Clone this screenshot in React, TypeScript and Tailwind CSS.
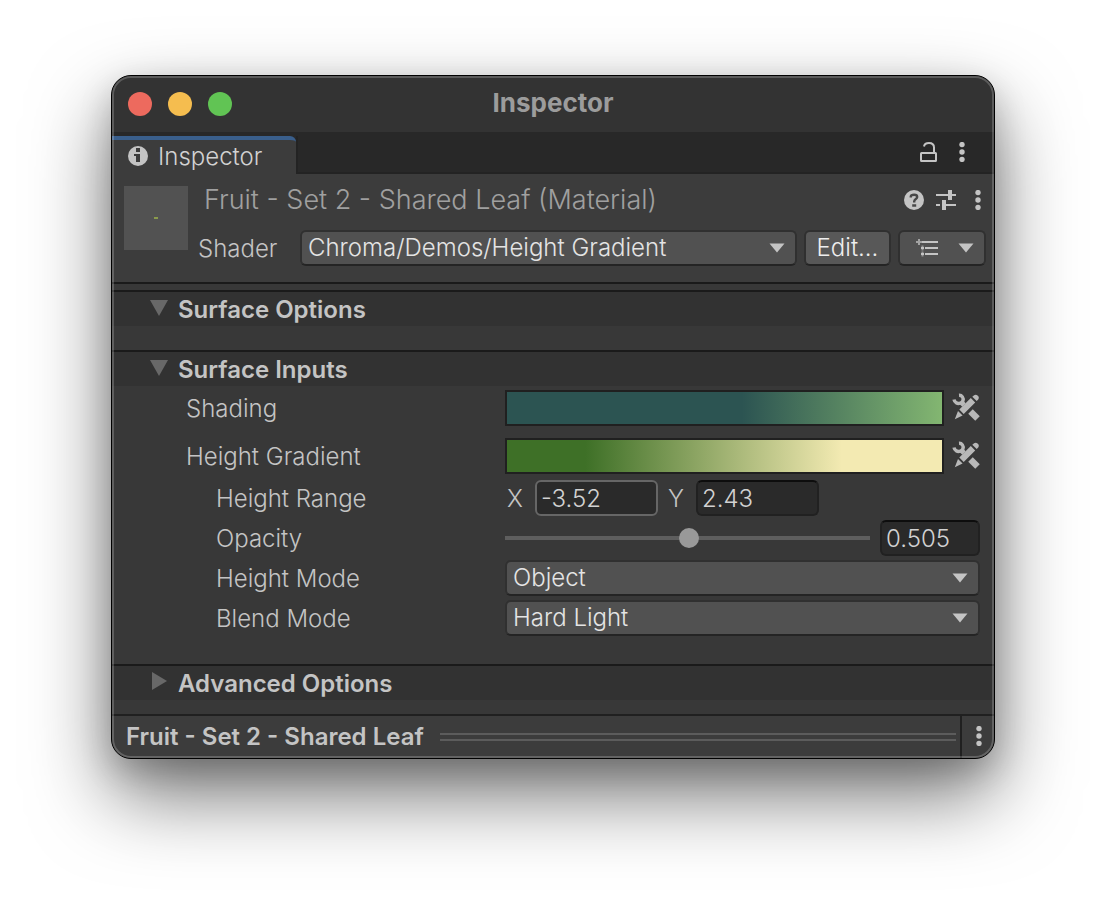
import React, { useState } from "react";

type IconProps = { className?: string };

function Kebab({ className = "" }: IconProps) {
  return (
    <svg className={className} width="8" height="20" viewBox="0 0 8 20" fill="#c4c4c4" aria-hidden="true">
      <circle cx="4" cy="2.6" r="2.7" />
      <circle cx="4" cy="10" r="2.7" />
      <circle cx="4" cy="17.4" r="2.7" />
    </svg>
  );
}

function InfoIcon() {
  return (
    <svg width="20" height="20" viewBox="0 0 20 20" aria-hidden="true">
      <circle cx="10" cy="10" r="10" fill="#c4c4c4" />
      <path d="M8 2h4v4H8zM6 8h6v8H8v-6H6z" fill="#3c3c3c" />
    </svg>
  );
}

function HelpIcon() {
  return (
    <svg width="20" height="20" viewBox="0 0 20 20" aria-hidden="true">
      <circle cx="10" cy="10" r="10" fill="#c4c4c4" />
      <path d="M6.800 7.500V6.400C7 4.900 8.300 4.800 10.200 4.800c2 0 3 .4 3 2.200 0 2.200-3 2-3 4.600v.8" fill="none" stroke="#484848" strokeWidth="2.400" />
      <path d="M8.200 14.200h4v2.600h-4z" fill="#484848" />
    </svg>
  );
}

function LockIcon() {
  return (
    <svg width="18" height="20" viewBox="0 0 18 20" fill="none" stroke="#c4c4c4" strokeWidth="2" aria-hidden="true">
      <rect x="1" y="11" width="15" height="8" rx="0.5" />
      <path d="M4 4.500C4.300 2.300 6.300 1 9 1c3.200 0 5 1.900 5 4.500V11" />
    </svg>
  );
}

function PresetIcon() {
  return (
    <svg width="20" height="20" viewBox="0 0 20 20" fill="#c4c4c4" aria-hidden="true">
      <path d="M0 4h12v2H0zM12 0h4v4h4v2h-4v4h-4zM0 14h4v2H0zM6 10h4v4h10v2H10v4H6z" />
    </svg>
  );
}

function ListIcon() {
  return (
    <svg width="22" height="18" viewBox="0 0 22 18" fill="#c4c4c4" aria-hidden="true">
      <path d="M6 2h16v2H6zM9 8h13v2H9zM9 14h13v2H9z" />
      <path d="M5 8h3v2H5zM5 14h3v2H5z" />
      <path d="M5.500 6.500h2v5h-2zM5.500 12.500h2v5h-2z" opacity=".6" />
      <path d="M2 0h2v6H2zM0 2h6v2H0z" opacity=".7" />
    </svg>
  );
}

function ToolsIcon() {
  return (
    <svg width="28" height="28" viewBox="0 0 28 28" aria-hidden="true">
      <g fill="none" stroke="#b8b8b8">
        <path d="M2 6.500C2.600 9.600 5.200 11 8.200 10.200c2.800-.8 3.800-3.900 2.200-6.300C9.600 2.700 8.500 2.100 7 2.200" strokeWidth="3.400" />
        <path d="M9 9l3 3" strokeWidth="5" />
        <path d="M18.500 18.500l7 7" strokeWidth="6.400" />
      </g>
      <path d="M18.800 5L23.200 9.400 11.700 21 7.300 16.600zM20.300 3.700L22.100 2.300c1-.9 2.500-.7 3.400.2l.6.6c.9.9 1 2.400.1 3.300L24.700 8.100zM6 18l4.600 4.600L2.800 26.200z" fill="#b8b8b8" />
    </svg>
  );
}

function Caret({ className = "" }: IconProps) {
  return (
    <svg className={className} width="16" height="10" viewBox="0 0 16 10" fill="#c4c4c4" aria-hidden="true">
      <path d="M.5 0.500h15L8 9.500z" />
    </svg>
  );
}

function Dropdown({ id, options }: { id: string; options: string[] }) {
  return (
    <div className="relative min-w-0 flex-1">
      <select
        id={id}
        className="block h-9 w-full appearance-none rounded-md border-2 border-[#303030] border-b-[#242424] bg-[#515151] pr-8 pl-[6px] text-[24px] leading-7 font-[350] text-[#e4e4e4] outline-none"
      >
        {options.map((o) => (
          <option key={o}>{o}</option>
        ))}
      </select>
      <Caret className="pointer-events-none absolute top-[13px] right-3" />
    </div>
  );
}

function Section({ title, open = false, children }: { title: string; open?: boolean; children?: React.ReactNode }) {
  const [expanded, setExpanded] = useState(open);
  return (
    <section>
      <h2>
        <button
          type="button"
          aria-expanded={expanded}
          onClick={() => setExpanded(!expanded)}
          className="flex h-9 w-full items-center border-t-2 border-[#1a1a1a] bg-[#323232] pt-[2px] pl-[38px] text-left font-semibold"
        >
          <span className="flex h-6 w-7 items-start">
            <svg width="18" height="20" viewBox="0 0 18 20" fill="#686868" aria-hidden="true">
              {expanded ? <path d="M0 2h18L9 18z" /> : <path d="M2 0v18l15-9z" />}
            </svg>
          </span>
          {title}
        </button>
      </h2>
      {expanded && children}
    </section>
  );
}

function Row({ label, htmlFor, nested = false, children }: { label: string; htmlFor: string; nested?: boolean; children: React.ReactNode }) {
  return (
    <div className="flex h-9 items-center">
      <label htmlFor={htmlFor} className={nested ? "w-[319px] shrink-0 pt-[2px] pl-[30px]" : "w-[319px] shrink-0 pt-[2px]"}>
        {label}
      </label>
      {children}
    </div>
  );
}

function GradientField({ id, name, className }: { id: string; name: string; className: string }) {
  return (
    <>
      <button id={id} type="button" aria-label={name} className={`h-9 min-w-0 flex-1 border-2 border-[#202020] ${className}`} />
      <button type="button" aria-label={`${name} tools`} className="ml-2 flex shrink-0 pb-[2px]">
        <ToolsIcon />
      </button>
    </>
  );
}

const field = "h-9 rounded-md border-2 bg-[#2a2a2a] px-1 text-[24px] font-[350] text-[#d2d2d2] outline-none";
const rest = "border-[#212121] border-t-[#0d0d0d]";

export default function App() {
  const [opacity, setOpacity] = useState("0.505");
  return (
    <main className="min-h-screen overflow-hidden bg-white px-[111px] pt-[75px] pb-[147px] font-['Inter',sans-serif] text-[24px] leading-7 font-[350] text-[#c4c4c4]">
      <div className="relative overflow-hidden rounded-[20px] border border-black bg-[#383838] shadow-[0_36px_80px_rgba(0,0,0,0.55),0_12px_32px_rgba(0,0,0,0.18)]">
        <header className="grid h-14 grid-cols-[1fr_auto_1fr] items-center bg-[#333333] px-4">
          <div className="flex gap-4">
            <button type="button" aria-label="Close" className="size-6 rounded-full bg-[#ed6a5e]" />
            <button type="button" aria-label="Minimize" className="size-6 rounded-full bg-[#f5bd4f]" />
            <button type="button" aria-label="Zoom" className="size-6 rounded-full bg-[#61c454]" />
          </div>
          <h1 className="pb-[2px] text-[26px] font-bold text-[#9c9c9c]">Inspector</h1>
        </header>

        <nav className="flex h-[42px] bg-[#282828] pt-1">
          <button type="button" className="flex w-[184px] items-center gap-[10px] rounded-tr-md border-t-4 border-[#3a5f8c] bg-[#3c3c3c] pl-4 text-[#d2d2d2]">
            <span className="pb-[2px]">
              <InfoIcon />
            </span>
            Inspector
          </button>
          <div className="flex flex-1 items-center justify-end gap-5 border-b-2 border-l-2 border-[#232323] pr-7 pb-1">
            <button type="button" aria-label="Lock" className="flex"><LockIcon /></button>
            <button type="button" aria-label="Tab menu" className="flex"><Kebab /></button>
          </div>
        </nav>

        <div className="flex h-[110px] border-b-2 border-[#1a1a1a] bg-[#3c3c3c] pt-3 pr-2 pl-3">
          <div className="flex size-16 shrink-0 items-center justify-center bg-[#525252]">
            <span className="h-[2px] w-1 bg-[#8a9a4c]" />
          </div>
          <div className="min-w-0 flex-1 pl-[10px]">
            <div className="flex h-7 items-center gap-3 pl-[6px]">
              <h2 className="flex-1 text-[27px] text-[#a0a0a0]">Fruit - Set 2 - Shared Leaf (Material)</h2>
              <button type="button" aria-label="Help" className="flex"><HelpIcon /></button>
              <button type="button" aria-label="Presets" className="flex"><PresetIcon /></button>
              <button type="button" aria-label="Material menu" className="flex pr-1 pl-[6px]"><Kebab /></button>
            </div>
            <div className="mt-4 flex h-9 items-center gap-[7px]">
              <label htmlFor="shader" className="w-[95px] shrink-0 pt-[2px]">Shader</label>
              <Dropdown id="shader" options={["Chroma/Demos/Height Gradient"]} />
              <button type="button" className="h-9 w-[87px] rounded-md border-2 border-[#303030] border-b-[#242424] bg-[#585858] text-[#eeeeee]">
                Edit...
              </button>
              <button type="button" aria-label="Shader list" className="flex h-9 w-[88px] items-center justify-between rounded-md border-2 border-[#303030] border-b-[#242424] bg-[#515151] pr-[10px] pl-4">
                <ListIcon />
                <Caret />
              </button>
            </div>
          </div>
        </div>

        <div className="flex flex-col pt-[6px]">
          <Section title="Surface Options" open>
            <div className="h-6" />
          </Section>
          <Section title="Surface Inputs" open>
            <div className="flex flex-col gap-1 pt-1 pr-[14px] pb-7 pl-[74px]">
              <div className="mb-[2px] flex flex-col gap-3">
                <Row label="Shading" htmlFor="shading">
                  <GradientField id="shading" name="Shading" className="bg-[linear-gradient(90deg,#2c5452_54%,#83b671)]" />
                </Row>
                <Row label="Height Gradient" htmlFor="height-gradient">
                  <GradientField id="height-gradient" name="Height Gradient" className="bg-[linear-gradient(90deg,#3e7027_18%,#f3eab2_77%)]" />
                </Row>
              </div>
              <Row label="Height Range" htmlFor="range-x" nested>
                <label htmlFor="range-x" className="w-[30px] pt-[2px] pl-[2px]">X</label>
                <input id="range-x" defaultValue="-3.52" className={`${field} w-[123px] border-[#666666]`} />
                <label htmlFor="range-y" className="ml-[10px] w-7 pt-[2px]">Y</label>
                <input id="range-y" defaultValue="2.43" className={`${field} w-[123px] ${rest}`} />
              </Row>
              <Row label="Opacity" htmlFor="opacity" nested>
                <input
                  id="opacity"
                  type="range"
                  min="0"
                  max="1"
                  step="0.005"
                  value={opacity}
                  onChange={(e) => setOpacity(e.target.value)}
                  className="h-1 min-w-0 flex-1 appearance-none bg-[#5e5e5e] outline-none [&::-webkit-slider-thumb]:size-5 [&::-webkit-slider-thumb]:appearance-none [&::-webkit-slider-thumb]:rounded-full [&::-webkit-slider-thumb]:bg-[#999999]"
                />
                <input
                  aria-label="Opacity value"
                  value={opacity}
                  onChange={(e) => setOpacity(e.target.value)}
                  className={`${field} ml-[10px] w-[100px] ${rest}`}
                />
              </Row>
              <Row label="Height Mode" htmlFor="height-mode" nested>
                <Dropdown id="height-mode" options={["Object", "World"]} />
              </Row>
              <Row label="Blend Mode" htmlFor="blend-mode" nested>
                <Dropdown id="blend-mode" options={["Hard Light", "Multiply"]} />
              </Row>
            </div>
          </Section>
          <Section title="Advanced Options" />
        </div>

        <footer className="mt-[14px] flex h-11 border-t-2 border-[#202020] bg-[#3c3c3c]">
          <div className="flex min-w-0 flex-1 items-center gap-4 pr-1 pl-[14px]">
            <h2 className="font-semibold">Fruit - Set 2 - Shared Leaf</h2>
            <div className="h-2 flex-1 border-y-2 border-[#5c5c5c]" />
          </div>
          <button type="button" aria-label="Preview menu" className="flex w-[34px] items-center justify-center border-l-2 border-[#202020] pb-[2px] pl-[2px]">
            <Kebab />
          </button>
        </footer>
        <div className="pointer-events-none absolute inset-0 rounded-[19px] border-2 border-white/20" />
      </div>
    </main>
  );
}
